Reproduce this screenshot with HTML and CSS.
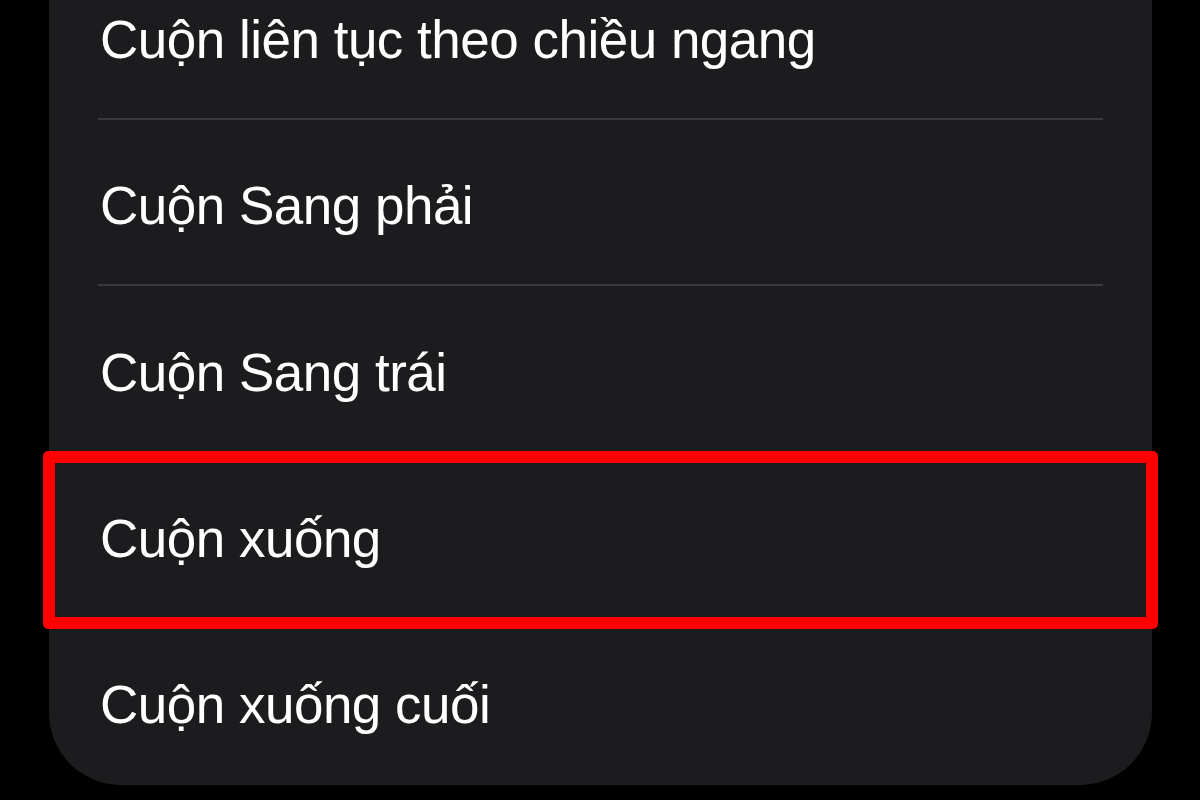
FILE: index.html
```html
<!DOCTYPE html>
<html lang="vi">
<head>
<meta charset="utf-8">
<title>Cuộn</title>
<link rel="stylesheet" href="styles.css">
</head>
<body>
<div class="panel">
  <div class="row"><span class="label">Cuộn liên tục theo chiều ngang</span></div>
  <div class="row"><span class="label">Cuộn Sang phải</span></div>
  <div class="row"><span class="label">Cuộn Sang trái</span></div>
  <div class="row selected"><span class="label">Cuộn xuống</span><div class="highlight"></div></div>
  <div class="row last"><span class="label">Cuộn xuống cuối</span></div>
</div>
</body>
</html>
```
FILE: styles.css
```css
html, body {
  margin: 0;
  padding: 0;
  background: #000;
  height: 800px;
  overflow: hidden;
}
.panel {
  margin: -46px 0 0 49px;
  width: 1103px;
  height: 831px;
  background: #1c1c1e;
  border-radius: 0 0 72px 72px;
  display: flex;
  flex-direction: column;
  padding: 0 49px;
  box-sizing: border-box;
}
.row {
  position: relative;
  height: 166px;
  display: flex;
  align-items: center;
  box-sizing: border-box;
  border-bottom: 2px solid #3a3a3c;
}
.row.last, .row.selected { border-bottom: none; }
.row:nth-child(3) { border-bottom: none; }
.label {
  font-family: "Liberation Sans", Arial, sans-serif;
  font-size: 53px;
  letter-spacing: -0.5px;
  color: #fff;
  padding-left: 2px;
  line-height: 1;
  position: relative;
  top: 3px;
}
.highlight {
  position: absolute;
  top: -1px;
  bottom: -11px;
  left: -55px;
  right: -55px;
  border: 12px solid #ff0000;
  border-radius: 5px;
  pointer-events: none;
}
```
